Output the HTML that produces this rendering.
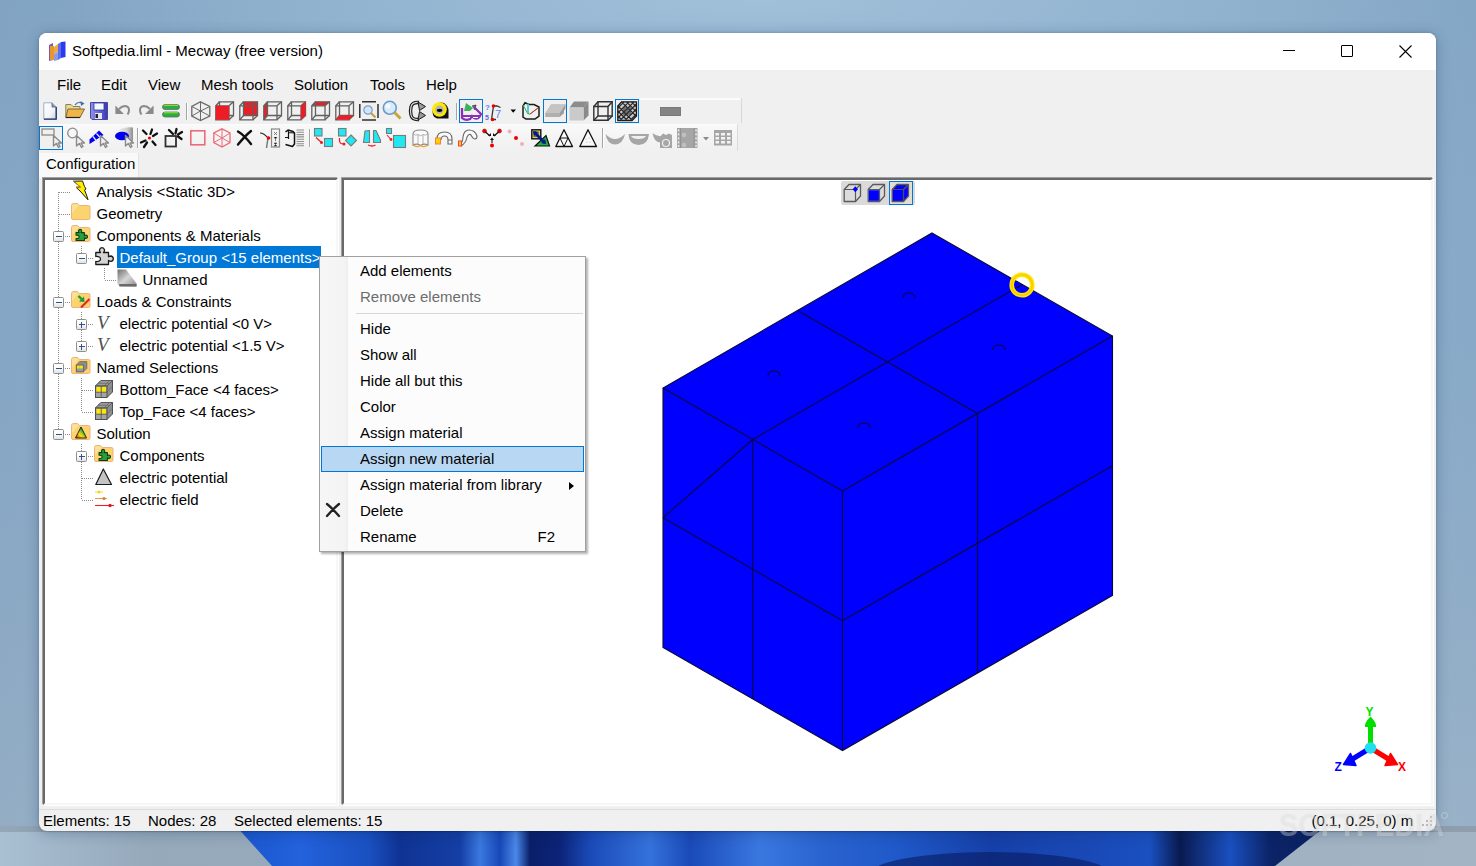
<!DOCTYPE html>
<html><head><meta charset="utf-8">
<style>
*{margin:0;padding:0;box-sizing:border-box}
html,body{width:1476px;height:866px;overflow:hidden}
body{position:relative;font-family:"Liberation Sans",sans-serif;font-size:15px;color:#000;
background:radial-gradient(ellipse 700px 120px at 760px 0px,rgba(190,215,235,.45),rgba(190,215,235,0)),linear-gradient(90deg,rgba(110,140,175,.25) 0%,rgba(255,255,255,0) 25%,rgba(255,255,255,0) 80%,rgba(110,140,175,.15) 100%),linear-gradient(180deg,#89acca 0%,#8eafcc 45%,#99b4cb 80%,#a2b9cc 100%);}
.a{position:absolute}
.t{position:absolute;white-space:nowrap;line-height:15px;font-size:15px}
svg{position:absolute;overflow:visible}
#win{position:absolute;left:39px;top:33px;width:1397px;height:798px;background:#f0f0f0;border-radius:8px;overflow:hidden;box-shadow:0 2px 14px rgba(10,40,80,.28), 0 0 3px rgba(0,0,0,.2)}
.sunk{position:absolute;background:#fff;border-top:2px solid #696969;border-left:2px solid #696969;border-right:2px solid #f7f7f7;border-bottom:2px solid #f7f7f7;box-shadow:-1px -1px 0 #a0a0a0, 1px 1px 0 #fff}
</style></head>
<body>
<svg class="a" style="left:0;top:826px" width="1476" height="40">
 <defs>
  <linearGradient id="wl" x1="0" x2="1" y1="0" y2="0">
   <stop offset="0" stop-color="#a9bfd2"/><stop offset="0.1" stop-color="#95a9bb"/><stop offset="0.6" stop-color="#9cadbd"/><stop offset="1" stop-color="#a3b4c4"/>
  </linearGradient>
  <linearGradient id="wb" gradientUnits="userSpaceOnUse" x1="0" x2="1476" y1="0" y2="0"><stop offset="0.1606" stop-color="#1a56cc"/><stop offset="0.2033" stop-color="#2362dc"/><stop offset="0.2507" stop-color="#1a50c0"/><stop offset="0.2710" stop-color="#0f3394"/><stop offset="0.3117" stop-color="#153fa5"/><stop offset="0.3252" stop-color="#3a78e0"/><stop offset="0.3388" stop-color="#1848b8"/><stop offset="0.3496" stop-color="#4a88e8"/><stop offset="0.3591" stop-color="#0a1f6a"/><stop offset="0.3794" stop-color="#0c2478"/><stop offset="0.3997" stop-color="#1a4ab8"/><stop offset="0.4404" stop-color="#3572dc"/><stop offset="0.4675" stop-color="#1a4ab8"/><stop offset="0.5149" stop-color="#3a78e0"/><stop offset="0.5556" stop-color="#2a64d0"/><stop offset="0.6098" stop-color="#1f58c8"/><stop offset="0.6707" stop-color="#1640a8"/><stop offset="0.7453" stop-color="#1a4ab8"/><stop offset="0.7791" stop-color="#1a50c0"/><stop offset="0.7995" stop-color="#0a1a50"/><stop offset="0.8333" stop-color="#1a50c0"/><stop offset="0.8604" stop-color="#0c2468"/><stop offset="0.8984" stop-color="#0a2060"/></linearGradient>
  <linearGradient id="wv" x1="0" x2="0" y1="0" y2="1"><stop offset="0" stop-color="#000" stop-opacity=".15"/><stop offset="1" stop-color="#000" stop-opacity="0"/></linearGradient>
 </defs>
 <rect x="0" y="0" width="1476" height="40" fill="url(#wl)"/>
 <polygon points="236,0 1326,0 1275,40 272,40" fill="url(#wb)"/><ellipse cx="990" cy="48" rx="120" ry="22" fill="#061a60" opacity=".6"/><path d="M0 0H1476V6H0Z" fill="#000" opacity=".12"/>
</svg>
<div id="win">
  <div class="a" style="left:0;top:0;width:1397px;height:37px;background:#fff"></div>
  <div class="t" style="left:33px;top:10px">Softpedia.liml - Mecway (free version)</div>
  <div class="a" style="left:1244px;top:17px;width:12px;height:1px;background:#000"></div>
  <div class="a" style="left:1302px;top:12px;width:12px;height:12px;border:1px solid #000;border-radius:1px"></div>
  <svg style="left:1360px;top:12px" width="13" height="13"><path d="M0.5 0.5L12.5 12.5M12.5 0.5L0.5 12.5" stroke="#000" stroke-width="1.1"/></svg>
  <div class="t" style="left:18px;top:44px">File</div>
  <div class="t" style="left:62px;top:44px">Edit</div>
  <div class="t" style="left:109px;top:44px">View</div>
  <div class="t" style="left:162px;top:44px">Mesh tools</div>
  <div class="t" style="left:255px;top:44px">Solution</div>
  <div class="t" style="left:331px;top:44px">Tools</div>
  <div class="t" style="left:387px;top:44px">Help</div>
  <div class="a" style="left:0;top:120px;width:100px;height:25px;background:#f9f9f9;border-right:1px solid #e3e3e3"></div>
  <div class="t" style="left:7px;top:123px">Configuration</div>
  <div class="a" style="left:0;top:776px;width:1397px;height:1px;background:#dcdcdc"></div>
  <div class="t" style="left:4px;top:780px">Elements: 15</div>
  <div class="t" style="left:109px;top:780px">Nodes: 28</div>
  <div class="t" style="left:195px;top:780px">Selected elements: 15</div>
  <div class="t" style="left:1272.5px;top:780px">(0.1, 0.25, 0) m</div>
</div>
<div class="sunk" style="left:43px;top:178px;width:295px;height:627px"></div>
<div class="sunk" style="left:342px;top:178px;width:1091px;height:627px"></div>
<div class="a" style="left:117px;top:246px;width:204px;height:22px;background:#0078d7"></div>
<div class="t" style="left:96.5px;top:184px;color:#000">Analysis &lt;Static 3D&gt;</div>
<div class="t" style="left:96.5px;top:206px;color:#000">Geometry</div>
<div class="t" style="left:96.5px;top:228px;color:#000">Components &amp; Materials</div>
<div class="t" style="left:119.5px;top:250px;color:#fff">Default_Group &lt;15 elements&gt;</div>
<div class="t" style="left:142.5px;top:272px;color:#000">Unnamed</div>
<div class="t" style="left:96.5px;top:294px;color:#000">Loads &amp; Constraints</div>
<div class="t" style="left:119.5px;top:316px;color:#000">electric potential &lt;0 V&gt;</div>
<div class="t" style="left:119.5px;top:338px;color:#000">electric potential &lt;1.5 V&gt;</div>
<div class="t" style="left:96.5px;top:360px;color:#000">Named Selections</div>
<div class="t" style="left:119.5px;top:382px;color:#000">Bottom_Face &lt;4 faces&gt;</div>
<div class="t" style="left:119.5px;top:404px;color:#000">Top_Face &lt;4 faces&gt;</div>
<div class="t" style="left:96.5px;top:426px;color:#000">Solution</div>
<div class="t" style="left:119.5px;top:448px;color:#000">Components</div>
<div class="t" style="left:119.5px;top:470px;color:#000">electric potential</div>
<div class="t" style="left:119.5px;top:492px;color:#000">electric field</div>
<div class="a" style="left:39px;top:98px;width:703px;height:25px;background:#f0f0f0;border-right:1px solid #d8d8d8"></div>
<div class="a" style="left:640px;top:98px;width:101px;height:1.5px;background:#fbfbfb"></div>
<div class="a" style="left:39px;top:124px;width:699px;height:27px;background:linear-gradient(180deg,#f9f9f9,#f4f4f4 50%,#f0f0f0);border-top:1px solid #fcfcfc;border-right:1px solid #dadada"></div>
<div class="a" style="left:459px;top:99px;width:24px;height:24px;border:1.5px solid #0078d7;background:#f2f0ee"></div>
<div class="a" style="left:543px;top:99px;width:24px;height:24px;border:1.5px solid #0078d7;background:#f2f0ee"></div>
<div class="a" style="left:615px;top:99px;width:24px;height:24px;border:1.5px solid #0078d7;background:#f2f0ee"></div>
<div class="a" style="left:39px;top:126px;width:24px;height:24px;border:1.5px solid #0078d7;background:#f2f0ee"></div>
<div class="a" style="left:186px;top:103px;width:1px;height:17px;background:#a5a5a5;box-shadow:1px 0 0 #fff"></div>
<div class="a" style="left:456px;top:103px;width:1px;height:17px;background:#a5a5a5;box-shadow:1px 0 0 #fff"></div>
<div class="a" style="left:137px;top:128px;width:1px;height:20px;background:#a5a5a5;box-shadow:1px 0 0 #fff"></div>
<div class="a" style="left:309px;top:129px;width:1px;height:18px;background:#a5a5a5;box-shadow:1px 0 0 #fff"></div>
<div class="a" style="left:602px;top:128px;width:1px;height:20px;background:#a5a5a5;box-shadow:1px 0 0 #fff"></div>
<svg style="left:0;top:0" width="1476" height="200"><g transform="translate(43,102)"><defs><linearGradient id="nd" x1="0" x2="1" y1="0" y2="1"><stop offset="0" stop-color="#fff"/><stop offset=".6" stop-color="#f2f4f8"/><stop offset="1" stop-color="#c8d0dc"/></linearGradient></defs><path d="M0.8 0.8H9L13.2 5V17.2H0.8Z" fill="url(#nd)" stroke="#9fb0c4" stroke-width="1"/><path d="M13.2 5V17.2H1" stroke="#1f2a6a" stroke-width="1.3" fill="none"/><path d="M9 0.8V5H13.2" fill="#8ea0b8" stroke="#4a5a88" stroke-width=".8"/></g><g transform="translate(65,100)"><path d="M10 5Q13 1 17 3" stroke="#5a7ab0" stroke-width="1.3" fill="none"/><path d="M15.5 1L19.5 3.5L16 6Z" fill="#4a6aa8"/><path d="M0.8 4.5H6L8 6.5H15V17.5H0.8Z" fill="#ead98a" stroke="#8a8060" stroke-width="1"/><path d="M3 9H19.5L15 17.5H0.8Z" fill="#f0b448" stroke="#7a6a40" stroke-width="1"/><path d="M1 17.5H15" stroke="#222" stroke-width="1.2"/></g><g transform="translate(90,102)"><defs><linearGradient id="fl" x1="0" x2="1"><stop offset="0" stop-color="#9090f0"/><stop offset="1" stop-color="#3a3ab0"/></linearGradient></defs><path d="M0.5 0.5H17.5V17.5H2L0.5 16Z" fill="url(#fl)" stroke="#4848a8" stroke-width="1"/><rect x="4" y="1" width="10" height="7" fill="#f6f8ff" stroke="#2a3aa0" stroke-width=".8"/><rect x="5" y="11" width="7" height="6" fill="#e6e6f0"/><rect x="5.5" y="12" width="2.5" height="4" fill="#222"/></g><g transform="translate(114,105)"><path d="M2 2L8.5 8.5M2 2V8.5H8.5Z" fill="#8a8a8a" stroke="#8a8a8a" stroke-width="1.2"/><path d="M5 4Q8 1 11 1Q15 1.5 15 5Q15 8 13.5 9.5" stroke="#8a8a8a" stroke-width="2" fill="none"/></g><g transform="translate(139,105)"><g transform="translate(16,0) scale(-1,1)"><path d="M2 2L8.5 8.5M2 2V8.5H8.5Z" fill="#8a8a8a" stroke="#8a8a8a" stroke-width="1.2"/><path d="M5 4Q8 1 11 1Q15 1.5 15 5Q15 8 13.5 9.5" stroke="#8a8a8a" stroke-width="2" fill="none"/></g></g><g transform="translate(162,104)"><rect x="0.5" y="0.5" width="17" height="5" rx="2.5" fill="#22b040" stroke="#6a6a6a" stroke-width=".8"/><path d="M2 1.3H16" stroke="#b0e030" stroke-width="1"/><rect x="0.5" y="8" width="17" height="5" rx="2.5" fill="#22b040" stroke="#6a6a6a" stroke-width=".8"/><path d="M2 8.8H16" stroke="#b0e030" stroke-width="1"/></g><g transform="translate(191,101)"><g stroke="#6a6a6a" stroke-width="1.3" fill="none"><path d="M9.5 0.8L18.8 5.5V15L9.5 19.5L0.8 15V5.5Z"/><path d="M9.5 10L9.5 0.8M9.5 10L0.8 15M9.5 10L18.8 15M9.5 10L0.8 5.5M9.5 10L18.8 5.5M9.5 10V19.5" stroke-width="1"/></g></g><g transform="translate(215,101)"><g stroke="#606060" stroke-width="1.3" fill="none"><path d="M4.5 0.8H18.5V14.5H4.5Z"/><path d="M0.8 4.8H14V18.8H0.8Z"/><path d="M0.8 4.8L4.5 0.8M14 4.8L18.5 0.8M14 18.8L18.5 14.5M0.8 18.8L4.5 14.5"/></g><path d="M0.8 4.8H14V18.8H0.8Z" fill="#ee1c24"/></g><g transform="translate(239,101)"><path d="M4.5 0.8H18.5V14.5H4.5Z" fill="#ee1c24"/><g stroke="#606060" stroke-width="1.3" fill="none"><path d="M4.5 0.8H18.5V14.5H4.5Z"/><path d="M0.8 4.8H14V18.8H0.8Z"/><path d="M0.8 4.8L4.5 0.8M14 4.8L18.5 0.8M14 18.8L18.5 14.5M0.8 18.8L4.5 14.5"/></g></g><g transform="translate(263,101)"><path d="M0.8 4.8L4.5 0.8V14.5L0.8 18.8Z" fill="#ee1c24"/><g stroke="#606060" stroke-width="1.3" fill="none"><path d="M4.5 0.8H18.5V14.5H4.5Z"/><path d="M0.8 4.8H14V18.8H0.8Z"/><path d="M0.8 4.8L4.5 0.8M14 4.8L18.5 0.8M14 18.8L18.5 14.5M0.8 18.8L4.5 14.5"/></g></g><g transform="translate(287,101)"><g stroke="#606060" stroke-width="1.3" fill="none"><path d="M4.5 0.8H18.5V14.5H4.5Z"/><path d="M0.8 4.8H14V18.8H0.8Z"/><path d="M0.8 4.8L4.5 0.8M14 4.8L18.5 0.8M14 18.8L18.5 14.5M0.8 18.8L4.5 14.5"/></g><path d="M14 4.8L18.5 0.8V14.5L14 18.8Z" fill="#ee1c24"/></g><g transform="translate(311,101)"><path d="M0.8 4.8L4.5 0.8H18.5L14 4.8Z" fill="#ee1c24"/><g stroke="#606060" stroke-width="1.3" fill="none"><path d="M4.5 0.8H18.5V14.5H4.5Z"/><path d="M0.8 4.8H14V18.8H0.8Z"/><path d="M0.8 4.8L4.5 0.8M14 4.8L18.5 0.8M14 18.8L18.5 14.5M0.8 18.8L4.5 14.5"/></g></g><g transform="translate(335,101)"><g stroke="#606060" stroke-width="1.3" fill="none"><path d="M4.5 0.8H18.5V14.5H4.5Z"/><path d="M0.8 4.8H14V18.8H0.8Z"/><path d="M0.8 4.8L4.5 0.8M14 4.8L18.5 0.8M14 18.8L18.5 14.5M0.8 18.8L4.5 14.5"/></g><path d="M0.8 18.8L4.5 14.5H18.5L14 18.8Z" fill="#ee1c24"/></g><g transform="translate(359,101)"><path d="M3 0.8H17M3 19H17M0.8 3V17M19 3V17" stroke="#303030" stroke-width="1.5"/><circle cx="9" cy="9" r="4.2" fill="#cfe6fa" stroke="#7aa0c8" stroke-width="1.2"/><path d="M12 12L16.5 16.5" stroke="#c8a040" stroke-width="2.2"/></g><g transform="translate(382,100)"><circle cx="7.8" cy="7.8" r="6.5" fill="#d6ecfc" stroke="#6d98c8" stroke-width="1.6"/><circle cx="6" cy="6" r="2.5" fill="#fff" opacity=".7"/><path d="M12.5 12.5L18.5 18.5" stroke="#c9a43a" stroke-width="3"/></g><g transform="translate(409,101)"><path d="M10 1.5Q3 1 2 6Q1 10 2 14Q3 19 10 18.5" stroke="#1a1a1a" stroke-width="3.4" fill="none"/><path d="M10 1.5Q3 1 2 6Q1 10 2 14Q3 19 10 18.5" stroke="#d8d8d8" stroke-width="1.2" fill="none"/><path d="M9 1L16.5 5.5L10.5 9.5Z" fill="#9a9a9a" stroke="#1a1a1a" stroke-width="1"/><path d="M10.5 10.5L16.5 14.5L9 19Z" fill="#9a9a9a" stroke="#1a1a1a" stroke-width="1"/></g><g transform="translate(431,101)"><path d="M2 14Q0.5 7 5 3Q9 0.5 13 2Q17.5 5 17.5 10V17.5H6Q3 17 2 14Z" fill="#111"/><circle cx="8.5" cy="8.5" r="7.3" fill="#ffe800"/><circle cx="8.5" cy="8.8" r="4.2" fill="#b4b4b4"/><ellipse cx="8.5" cy="9.3" rx="2.8" ry="1.6" fill="#000"/></g><g transform="translate(461,102)"><path d="M5 1L12 6L9 9H3Z" fill="#40b060"/><path d="M11 4L15 3L13.5 8" stroke="#333" fill="#3a9a50" stroke-width=".8"/><path d="M1 6V16Q4 19 9 17L11 14L13 16Q18 18 20 12L13 5" stroke="#8a30b8" stroke-width="2.3" fill="none"/><path d="M2 14H19" stroke="#8a30b8" stroke-width="2"/><path d="M3.5 15.5H9M12 15.5H17" stroke="#fff" stroke-width="1.2"/></g><g transform="translate(485,102)"><text x="0" y="8" font-size="8" font-family="Liberation Sans" font-weight="bold" fill="#6a7af0">?</text><text x="0" y="18" font-size="7" font-family="Liberation Sans" font-weight="bold" fill="#5a6ae0">5</text><path d="M8.5 4L6.5 17.5M8.5 4H12L15.5 5.5M6.5 17.5H11" stroke="#333" stroke-width="1.3" fill="none"/><circle cx="8.5" cy="4" r="1.8" fill="#ee0000"/><circle cx="7.5" cy="17.5" r="1.8" fill="#ee0000"/><text x="10" y="16" font-size="11" font-family="Liberation Sans" fill="#6a7af0">7</text></g><g transform="translate(510,109)"><path d="M0.5 0.5H6L3.2 3.8Z" fill="#000"/></g><g transform="translate(522,102)"><path d="M3 0.8L7 2.5H12L17 5V14L13 17H4L1 15V4Z" fill="none" stroke="#1a1a1a" stroke-width="1.5"/><path d="M1 3L6 12M6 1V10Q6 13 8 12L16 6" stroke="#30b040" stroke-width="1" fill="none"/><path d="M6 2V11" stroke="#40c8f0" stroke-width="1.5"/><path d="M8 12L16 6" stroke="#ee2020" stroke-width="1"/></g><g transform="translate(545,104)"><path d="M0.5 9L6 0.5H20.5L19 6V9.5L14 13H0.5Z" fill="#a8a8a8"/><path d="M0.5 9L6 0.5H20.5L15 9Z" fill="#c4c4c4"/><path d="M0.5 9H15V13H0.5Z" fill="#b0b0b0"/><path d="M15 9L20.5 0.5V4.5L15 13Z" fill="#9a9a9a"/></g><g transform="translate(569,101)"><path d="M5 0.5H19.5L14.5 6.5H0.5Z" fill="#8c8c8c"/><path d="M14.5 6.5L19.5 0.5V14.5L14.5 19.5Z" fill="#8a8a8a"/><rect x="0.5" y="6.5" width="14" height="13" fill="#cacaca"/></g><g transform="translate(593,101)"><g stroke="#303030" stroke-width="1.4" fill="none"><path d="M5 0.8H19.2V15H5Z"/><path d="M0.8 5.5H15V19.2H0.8Z"/><path d="M0.8 5.5L5 0.8M15 5.5L19.2 0.8M15 19.2L19.2 15M0.8 19.2L5 15"/></g></g><g transform="translate(617,101)"><path d="M4.5 0.8H19.5V15L15 19.5H0.8V5Z" fill="#c8c8c8"/><g stroke="#1a1a1a" stroke-width="1.3" fill="none"><path d="M4.5 0.8H19.5V15L15 19.5H0.8V5Z"/></g><g stroke="#222" stroke-width="1.1" fill="none"><path d="M0.8 7L7 0.8M0.8 12L12 0.8M0.8 17L17 0.8M3 19.5L19.5 3M8 19.5L19.5 8M13 19.5L19.5 13M4.5 0.8L19.5 15.5M0.8 5L15.3 19.5M0.8 10L10.3 19.5M0.8 15L5.3 19.5M9.5 0.8L19.5 10.8M14.5 0.8L19.5 5.8"/></g><rect x="6" y="6" width="8" height="8" fill="#333" opacity=".6"/></g><g transform="translate(660,107)"><rect x="0" y="0" width="21" height="9" fill="#7a7a7a"/><rect x="1" y="1" width="19" height="7" fill="#858585"/></g><g transform="translate(39,126)"><rect x="3" y="3" width="12" height="6" fill="none" stroke="#8a8a8a" stroke-width="1.3"/><path d="M14.5 9.5V20.0L17.3 17.5L19.5 21.5L21.0 20.5L19.0 17.0H22.5Z" fill="#f0f0f0" stroke="#8a8a8a" stroke-width="1.4" stroke-linejoin="round"/></g><g transform="translate(66,126)"><circle cx="6.5" cy="7" r="4.8" fill="none" stroke="#8a8a8a" stroke-width="1.3"/><path d="M10.5 9.5V20.0L13.3 17.5L15.5 21.5L17.0 20.5L15.0 17.0H18.5Z" fill="#f0f0f0" stroke="#8a8a8a" stroke-width="1.4" stroke-linejoin="round"/></g><g transform="translate(89,126)"><path d="M0.5 13.5L10 4.5L14.5 9L0.5 18Z" fill="#0000ee"/><path d="M4 10.5L7.5 15M7.5 7.5L11 11.5" stroke="#d8e4ff" stroke-width="1.3"/><path d="M11.5 9.5V20.0L14.3 17.5L16.5 21.5L18.0 20.5L16.0 17.0H19.5Z" fill="#f0f0f0" stroke="#8a8a8a" stroke-width="1.4" stroke-linejoin="round"/></g><g transform="translate(114,126)"><defs><linearGradient id="eg" x1="0" x2="1"><stop offset="0" stop-color="#f0f0f0"/><stop offset=".6" stop-color="#d0d0d0"/><stop offset="1" stop-color="#909090"/></linearGradient></defs><path d="M4 4Q10 0.5 19 1.5V15Q12 14 6 13Z" fill="url(#eg)"/><ellipse cx="8" cy="10" rx="7" ry="4.3" fill="#0000ee"/><path d="M11.5 9.5V20.0L14.3 17.5L16.5 21.5L18.0 20.5L16.0 17.0H19.5Z" fill="#f0f0f0" stroke="#8a8a8a" stroke-width="1.4" stroke-linejoin="round"/></g><g transform="translate(140,128)"><g stroke="#111" stroke-width="2.3" stroke-linecap="round"><path d="M3 2.5L6.5 6M12 1.5L10.5 6M17 5.5L13 8M1 14.5L5.5 12.5M4 19L7 14.5M15.5 17L12.5 13.5"/></g><circle cx="9.5" cy="10" r="1.6" fill="#ee0000"/></g><g transform="translate(164,128)"><rect x="1.5" y="8" width="10.5" height="10.5" fill="none" stroke="#303030" stroke-width="1.8"/><g stroke="#111" stroke-width="2.3" stroke-linecap="round"><path d="M5 2L9 6M12.5 1L11.5 5.5M18 4L14 6.5M17.5 11L14 8.5"/></g></g><g transform="translate(190,130)"><rect x="0.8" y="0.8" width="14" height="14" fill="none" stroke="#ec6b78" stroke-width="1.6"/></g><g transform="translate(213,128)"><g stroke="#ec6b78" stroke-width="1.3" fill="none"><path d="M9 0.8L17 5V14.5L9 19L0.8 14.5V5Z"/><path d="M9 10V0.8M9 10L0.8 14.5M9 10L17 14.5M9 10L0.8 5M9 10L17 5M9 10V19" stroke-width="1"/></g></g><g transform="translate(237,130)"><path d="M1 1.5Q7 5 14 14M14 1Q8 6 1 14.5" stroke="#111" stroke-width="2.4" stroke-linecap="round"/></g><g transform="translate(259,128)"><path d="M1 5Q5 5 9 10" stroke="#222" stroke-width="1.2" fill="none"/><path d="M9 10L7.5 20" stroke="#777" stroke-width="1.5"/><circle cx="9.5" cy="10" r="1.8" fill="#ee0000"/><rect x="12.5" y="1" width="8" height="18" fill="none" stroke="#888" stroke-width="1.2"/><path d="M15 4L18 7M18 4L15 7M15 9L16.5 11L18 9M16.5 11V13M15 15H18L15 18H18" stroke="#666" stroke-width=".8"/></g><g transform="translate(284,129)"><path d="M1.5 3L4 1L9 2.5L10.5 4V15L8.5 17.5L1.5 15.5" stroke="#111" stroke-width="1.5" fill="none" stroke-linejoin="round"/><path d="M4 1L4.5 3.5L10.5 4M4.5 3.5V10M1 8.5H4.5" stroke="#111" stroke-width="1.2" fill="none"/><g stroke="#8e8e8e" stroke-width="1.1"><path d="M12.5 1H20M12.5 3.3H20M12.5 5.6H20M12.5 7.9H20M12.5 10.2H20M12.5 12.5H20M12.5 14.8H20M12.5 16.8H20"/></g></g><g transform="translate(314,128)"><rect x="0.5" y="0.5" width="7.5" height="7.5" fill="#1fe8f2" stroke="#7a7a7a" stroke-width="1.1"/><path d="M2 9.5L7.5 14.5" stroke="#ee1c24" stroke-width="1.2"/><circle cx="7.5" cy="14.5" r="1.5" fill="#ee1c24"/><rect x="10.5" y="10.5" width="8" height="8" fill="#1fe8f2" stroke="#7a7a7a" stroke-width="1.1"/></g><g transform="translate(338,128)"><rect x="0.5" y="0.5" width="7.5" height="7.5" fill="#1fe8f2" stroke="#7a7a7a" stroke-width="1.1"/><path d="M1.5 10V13Q2 16 5.5 16" stroke="#ee1c24" stroke-width="1.2" fill="none"/><circle cx="6" cy="16" r="1.5" fill="#ee1c24"/><path d="M13 7L18.5 12.5L13 18L7.5 12.5Z" fill="#1fe8f2" stroke="#7a7a7a" stroke-width="1.1"/></g><g transform="translate(363,129)"><path d="M0.5 13.5L2 2L6.5 1.5V13.5Z" fill="#1fe8f2" stroke="#7a7a7a" stroke-width="1.1"/><path d="M10.5 1.5H13L17.5 11V13.5H10.5Z" fill="#1fe8f2" stroke="#7a7a7a" stroke-width="1.1"/><path d="M5 16Q9 18 12.5 16" stroke="#ee1c24" stroke-width="1.3" fill="none"/></g><g transform="translate(386,128)"><rect x="0.5" y="0.5" width="5" height="5" fill="#1fe8f2" stroke="#7a7a7a" stroke-width="1.1"/><path d="M1 7L4.5 11" stroke="#ee1c24" stroke-width="1.1"/><circle cx="5" cy="11.5" r="1.4" fill="#ee1c24"/><rect x="7.5" y="7.5" width="12" height="12" fill="#1fe8f2" stroke="#7a7a7a" stroke-width="1.1"/></g><g transform="translate(412,129)"><path d="M1 5Q1 1 8.5 1Q16 1 16 5V16Q12 14 8.5 16.5Q5 14 1 16Z" fill="#fafafa" stroke="#8a8a8a" stroke-width="1.1"/><path d="M1 5Q4 7 6 5.5Q8.5 8 11 5.5Q13 7 16 5M6 6V15M11 6V15" stroke="#aaa" stroke-width=".9" fill="none"/><path d="M1 16Q5 19 8.5 16.5Q12 19 16 16" stroke="#f0a030" stroke-width="1.3" fill="none"/></g><g transform="translate(435,130)"><path d="M2 9Q2 2 9.5 2Q17 2 17 9V14H13V10Q13 6 9.5 6Q6 6 6 10" fill="#fafafa" stroke="#6a6a6a" stroke-width="1.1"/><path d="M13 10H17" stroke="#6a6a6a" stroke-width="1"/><rect x="0.5" y="8" width="5" height="6" fill="#ffd000" stroke="#f08040" stroke-width="1"/></g><g transform="translate(458,129)"><path d="M2 15Q5 13 5 8Q6 1 11 1Q17 1 19 7Q19 10 17 10Q15 10 13 6Q11 4 9 8Q8 14 3 17" fill="#fafafa" stroke="#6a6a6a" stroke-width="1.1"/><rect x="0.5" y="12" width="3" height="5" fill="#ffd000" stroke="#f04040" stroke-width="1"/></g><g transform="translate(482,129)"><circle cx="2.5" cy="2" r="2" fill="#ee0000" stroke="#800" stroke-width=".5"/><circle cx="17.5" cy="2" r="2" fill="#ee0000" stroke="#800" stroke-width=".5"/><circle cx="10" cy="16.5" r="2" fill="#ee0000"/><path d="M3.5 3L8 7M16.5 3L12 7" stroke="#111" stroke-width="1.3"/><path d="M6 7H9V4ZM14 7H11V4Z" fill="#111"/><path d="M10 14V10" stroke="#333" stroke-width="1.3"/><path d="M8 11L10 8.5L12 11Z" fill="#111"/></g><g transform="translate(507,129)"><circle cx="2.5" cy="2.5" r="2" fill="#f0b0b8"/><circle cx="9" cy="9" r="2" fill="#ee0000"/><circle cx="15" cy="15" r="2" fill="#f0b0b8"/></g><g transform="translate(531,129)"><rect x="0.8" y="0.8" width="9" height="9" fill="#f0d040" stroke="#111" stroke-width="1.4"/><rect x="2.5" y="2.5" width="5.5" height="5.5" fill="#2040c0" opacity=".7"/><path d="M4 17L15 6.5L18.5 17Z" fill="#20b040" stroke="#111" stroke-width="1.2"/><path d="M3 3L14 14" stroke="#001a8a" stroke-width="2.6"/><path d="M2 2L7 3L3 7Z M15 15L10 14L14 10Z" fill="#001a8a"/></g><g transform="translate(555,129)"><path d="M9 0.8L17.5 17.5H0.8Z" fill="#fafafa" stroke="#111" stroke-width="1.3" stroke-linejoin="round"/><path d="M5 9H13L9 17.5Z" fill="none" stroke="#111" stroke-width="1"/></g><g transform="translate(579,129)"><path d="M9 0.8L17.5 17.5H0.8Z" fill="#fafafa" stroke="#111" stroke-width="1.3" stroke-linejoin="round"/><g fill="#aaa"><circle cx="7" cy="10" r=".6"/><circle cx="10" cy="9" r=".6"/><circle cx="8" cy="13" r=".6"/><circle cx="11" cy="13" r=".6"/></g></g><g transform="translate(605,133)"><path d="M0.5 1Q2 11 10 11.5Q18 11 20 1Q15 6 10 6Q5 6 0.5 1Z" fill="#a6a6a6"/></g><g transform="translate(628,133)"><path d="M0.5 1H21Q20 12 10.5 12Q1 12 0.5 1Z" fill="#a6a6a6"/><path d="M3 3H18Q16.5 6 10.5 6Q4.5 6 3 3Z" fill="#f0f0f0"/></g><g transform="translate(652,132)"><path d="M0.5 1Q2 10 8 10.5L10 4Q5 5 0.5 1Z" fill="#a6a6a6"/><path d="M8 5L11 1.5L14 3L17 1.5L20 3V16H8Z" fill="#a6a6a6"/><circle cx="14" cy="11" r="3.5" fill="none" stroke="#f0f0f0" stroke-width="1.2"/></g><g transform="translate(677,128)"><rect x="0" y="0" width="20.5" height="20" fill="#a6a6a6"/><g fill="#f0f0f0"><rect x="0.8" y="1.5" width="1.5" height="1.8"/><rect x="0.8" y="5.5" width="1.5" height="1.8"/><rect x="0.8" y="9.5" width="1.5" height="1.8"/><rect x="0.8" y="13.5" width="1.5" height="1.8"/><rect x="0.8" y="17" width="1.5" height="1.8"/><rect x="18.3" y="1.5" width="1.5" height="1.8"/><rect x="18.3" y="5.5" width="1.5" height="1.8"/><rect x="18.3" y="9.5" width="1.5" height="1.8"/><rect x="18.3" y="13.5" width="1.5" height="1.8"/><rect x="18.3" y="17" width="1.5" height="1.8"/></g><path d="M3.5 0V20M17 0V20" stroke="#8e8e8e" stroke-width=".8"/><circle cx="7" cy="7" r="2.2" fill="#c0c0c0"/><circle cx="7" cy="17" r="2.2" fill="#c0c0c0"/></g><g transform="translate(703,137)"><path d="M0 0H6L3 3.5Z" fill="#8a8a8a"/></g><g transform="translate(714,130)"><rect x="0" y="0" width="18" height="15.5" fill="#a6a6a6"/><g fill="#f4f4f4"><rect x="1.5" y="3" width="3.5" height="2.5"/><rect x="7" y="3" width="4" height="2.5"/><rect x="13" y="3" width="3.5" height="2.5"/><rect x="1.5" y="7" width="3.5" height="2.5"/><rect x="7" y="7" width="4" height="2.5"/><rect x="13" y="7" width="3.5" height="2.5"/><rect x="1.5" y="11" width="3.5" height="2.5"/><rect x="7" y="11" width="4" height="2.5"/><rect x="13" y="11" width="3.5" height="2.5"/></g></g></svg>
<svg style="left:0;top:0" width="1476" height="866"><polygon points="932,233 1112.5,336 1112.5,595.5 842.5,750.5 663,647.5 663,388" fill="#0000ff"/><g stroke="#0a0a3a" stroke-width="1.1" fill="none"><polygon points="932,233 1112.5,336 1112.5,595.5 842.5,750.5 663,647.5 663,388"/><line x1="663" y1="388" x2="842.5" y2="491"/><line x1="842.5" y1="491" x2="1112.5" y2="336"/><line x1="842.5" y1="491" x2="842.5" y2="750.5"/><line x1="797.5" y1="310.5" x2="977.5" y2="413.5"/><line x1="752.75" y1="439.5" x2="1022.25" y2="284.5"/><line x1="752.75" y1="439.5" x2="752.75" y2="699.0"/><line x1="977.5" y1="413.5" x2="977.5" y2="673.0"/><line x1="663" y1="517.75" x2="842.5" y2="620.75"/><line x1="842.5" y1="620.75" x2="1112.5" y2="465.75"/><line x1="663" y1="517.75" x2="752.75" y2="439.5"/></g><path d="M903 298Q903 293 909 293Q915 293 915 298" stroke="#0a0a3a" stroke-width="1.1" fill="none"/><path d="M768 376Q768 371 774 371Q780 371 780 376" stroke="#0a0a3a" stroke-width="1.1" fill="none"/><path d="M993 350Q993 345 999 345Q1005 345 1005 350" stroke="#0a0a3a" stroke-width="1.1" fill="none"/><path d="M858 428Q858 423 864 423Q870 423 870 428" stroke="#0a0a3a" stroke-width="1.1" fill="none"/><circle cx="1022" cy="285" r="10.3" stroke="#ffe600" stroke-width="4.6" fill="none"/><circle cx="1022" cy="285" r="10.3" stroke="#f6c000" stroke-width="1.6" fill="none" opacity=".7"/></svg>
<div class="a" style="left:841px;top:181px;width:74px;height:24px;background:#dadada;border-radius:2px"></div>
<div class="a" style="left:889px;top:181px;width:24px;height:24px;border:1.3px solid #0078d7;background:#e3ddd8"></div>
<svg style="left:843px;top:183px" width="20" height="20"><path d="M1.2 6.5L6 1.5H17.5V13L12.5 18.5H1.2Z" fill="#dcdcdc" stroke="#5a5a5a" stroke-width="1.3" stroke-linejoin="round"/><path d="M1.2 6.5H12.5V18.5M12.5 6.5L17.5 1.5" stroke="#5a5a5a" stroke-width="1.2" fill="none"/><path d="M12.3 3.3L15 6.3L12.3 9.3L9.6 6.3Z" fill="#0000ff"/></svg>
<svg style="left:867px;top:183px" width="20" height="20"><path d="M1.2 6.5L6 1.5H17.5V13L12.5 18.5H1.2Z" fill="#dcdcdc" stroke="#5a5a5a" stroke-width="1.3" stroke-linejoin="round"/><path d="M1.2 6.5H12.5V18.5M12.5 6.5L17.5 1.5" stroke="#5a5a5a" stroke-width="1.2" fill="none"/><rect x="1.9" y="7.2" width="10" height="10.6" fill="#0000ff"/></svg>
<svg style="left:891px;top:183px" width="20" height="20"><path d="M1.2 6.5L6 1.5H17.5V13L12.5 18.5H1.2Z" fill="#0000ff" stroke="#5a5a5a" stroke-width="1.3" stroke-linejoin="round"/><path d="M1.2 6.5H12.5V18.5M12.5 6.5L17.5 1.5" stroke="#5a5a5a" stroke-width="1.2" fill="none"/><path d="M1.2 6.5H12.5V18.5M12.5 6.5L17.5 1.5" stroke="#4a4a6a" stroke-width="1.2" fill="none"/></svg>
<svg style="left:1330px;top:700px" width="90" height="80">
<g transform="translate(40.5,48)">
<path d="M0 0V-22" stroke="#00e000" stroke-width="5"/><path d="M0 -31.5Q-6.5 -25 -5.5 -21H5.5Q6.5 -25 0 -31.5Z" fill="#00e000"/>
<path d="M0 0L18 11" stroke="#ff0000" stroke-width="5"/><path d="M20 5.5L14.5 17.5L27 16.5Z" fill="#ff0000" stroke="#ff0000" stroke-width="1.5" stroke-linejoin="round"/>
<path d="M0 0L-18 11" stroke="#0000ff" stroke-width="5"/><path d="M-20 5.5L-14.5 17.5L-27 16.5Z" fill="#0000ff" stroke="#0000ff" stroke-width="1.5" stroke-linejoin="round"/>
<circle cx="0" cy="0" r="5.8" fill="#22ddee"/>
</g>
<text x="35.5" y="16" font-family="Liberation Sans" font-weight="bold" font-size="12" fill="#00e000">Y</text>
<text x="68" y="71" font-family="Liberation Sans" font-weight="bold" font-size="12" fill="#ff0000">X</text>
<text x="4.5" y="71" font-family="Liberation Sans" font-weight="bold" font-size="12" fill="#0000ff">Z</text>
</svg>
<div class="a" style="left:58px;top:192px;width:1px;height:242px;background:repeating-linear-gradient(180deg,#8c8c8c 0 1px,transparent 1px 2px)"></div>
<div class="a" style="left:59px;top:192px;width:12px;height:1px;background:repeating-linear-gradient(90deg,#8c8c8c 0 1px,transparent 1px 2px)"></div>
<div class="a" style="left:59px;top:214px;width:12px;height:1px;background:repeating-linear-gradient(90deg,#8c8c8c 0 1px,transparent 1px 2px)"></div>
<div class="a" style="left:59px;top:236px;width:12px;height:1px;background:repeating-linear-gradient(90deg,#8c8c8c 0 1px,transparent 1px 2px)"></div>
<div class="a" style="left:59px;top:302px;width:12px;height:1px;background:repeating-linear-gradient(90deg,#8c8c8c 0 1px,transparent 1px 2px)"></div>
<div class="a" style="left:59px;top:368px;width:12px;height:1px;background:repeating-linear-gradient(90deg,#8c8c8c 0 1px,transparent 1px 2px)"></div>
<div class="a" style="left:59px;top:434px;width:12px;height:1px;background:repeating-linear-gradient(90deg,#8c8c8c 0 1px,transparent 1px 2px)"></div>
<div class="a" style="left:81px;top:246px;width:1px;height:12px;background:repeating-linear-gradient(180deg,#8c8c8c 0 1px,transparent 1px 2px)"></div>
<div class="a" style="left:82px;top:258px;width:12px;height:1px;background:repeating-linear-gradient(90deg,#8c8c8c 0 1px,transparent 1px 2px)"></div>
<div class="a" style="left:81px;top:312px;width:1px;height:34px;background:repeating-linear-gradient(180deg,#8c8c8c 0 1px,transparent 1px 2px)"></div>
<div class="a" style="left:82px;top:324px;width:12px;height:1px;background:repeating-linear-gradient(90deg,#8c8c8c 0 1px,transparent 1px 2px)"></div>
<div class="a" style="left:82px;top:346px;width:12px;height:1px;background:repeating-linear-gradient(90deg,#8c8c8c 0 1px,transparent 1px 2px)"></div>
<div class="a" style="left:81px;top:378px;width:1px;height:34px;background:repeating-linear-gradient(180deg,#8c8c8c 0 1px,transparent 1px 2px)"></div>
<div class="a" style="left:82px;top:390px;width:12px;height:1px;background:repeating-linear-gradient(90deg,#8c8c8c 0 1px,transparent 1px 2px)"></div>
<div class="a" style="left:82px;top:412px;width:12px;height:1px;background:repeating-linear-gradient(90deg,#8c8c8c 0 1px,transparent 1px 2px)"></div>
<div class="a" style="left:81px;top:444px;width:1px;height:56px;background:repeating-linear-gradient(180deg,#8c8c8c 0 1px,transparent 1px 2px)"></div>
<div class="a" style="left:82px;top:456px;width:12px;height:1px;background:repeating-linear-gradient(90deg,#8c8c8c 0 1px,transparent 1px 2px)"></div>
<div class="a" style="left:82px;top:478px;width:12px;height:1px;background:repeating-linear-gradient(90deg,#8c8c8c 0 1px,transparent 1px 2px)"></div>
<div class="a" style="left:82px;top:500px;width:12px;height:1px;background:repeating-linear-gradient(90deg,#8c8c8c 0 1px,transparent 1px 2px)"></div>
<div class="a" style="left:104px;top:268px;width:1px;height:12px;background:repeating-linear-gradient(180deg,#8c8c8c 0 1px,transparent 1px 2px)"></div>
<div class="a" style="left:105px;top:280px;width:12px;height:1px;background:repeating-linear-gradient(90deg,#8c8c8c 0 1px,transparent 1px 2px)"></div>
<div class="a" style="left:53px;top:231px;width:11px;height:11px;border:1px solid #8f8f8f;border-radius:1.5px;background:linear-gradient(180deg,#fdfdfd 45%,#e2e2e2)"></div>
<div class="a" style="left:55.5px;top:236px;width:6px;height:1px;background:#2f4f8f"></div>
<div class="a" style="left:53px;top:297px;width:11px;height:11px;border:1px solid #8f8f8f;border-radius:1.5px;background:linear-gradient(180deg,#fdfdfd 45%,#e2e2e2)"></div>
<div class="a" style="left:55.5px;top:302px;width:6px;height:1px;background:#2f4f8f"></div>
<div class="a" style="left:53px;top:363px;width:11px;height:11px;border:1px solid #8f8f8f;border-radius:1.5px;background:linear-gradient(180deg,#fdfdfd 45%,#e2e2e2)"></div>
<div class="a" style="left:55.5px;top:368px;width:6px;height:1px;background:#2f4f8f"></div>
<div class="a" style="left:53px;top:429px;width:11px;height:11px;border:1px solid #8f8f8f;border-radius:1.5px;background:linear-gradient(180deg,#fdfdfd 45%,#e2e2e2)"></div>
<div class="a" style="left:55.5px;top:434px;width:6px;height:1px;background:#2f4f8f"></div>
<div class="a" style="left:76px;top:253px;width:11px;height:11px;border:1px solid #8f8f8f;border-radius:1.5px;background:linear-gradient(180deg,#fdfdfd 45%,#e2e2e2)"></div>
<div class="a" style="left:78.5px;top:258px;width:6px;height:1px;background:#2f4f8f"></div>
<div class="a" style="left:76px;top:319px;width:11px;height:11px;border:1px solid #8f8f8f;border-radius:1.5px;background:linear-gradient(180deg,#fdfdfd 45%,#e2e2e2)"></div>
<div class="a" style="left:78.5px;top:324px;width:6px;height:1px;background:#2f4f8f"></div>
<div class="a" style="left:81px;top:321.5px;width:1px;height:6px;background:#2f4f8f"></div>
<div class="a" style="left:76px;top:341px;width:11px;height:11px;border:1px solid #8f8f8f;border-radius:1.5px;background:linear-gradient(180deg,#fdfdfd 45%,#e2e2e2)"></div>
<div class="a" style="left:78.5px;top:346px;width:6px;height:1px;background:#2f4f8f"></div>
<div class="a" style="left:81px;top:343.5px;width:1px;height:6px;background:#2f4f8f"></div>
<div class="a" style="left:76px;top:451px;width:11px;height:11px;border:1px solid #8f8f8f;border-radius:1.5px;background:linear-gradient(180deg,#fdfdfd 45%,#e2e2e2)"></div>
<div class="a" style="left:78.5px;top:456px;width:6px;height:1px;background:#2f4f8f"></div>
<div class="a" style="left:81px;top:453.5px;width:1px;height:6px;background:#2f4f8f"></div>
<svg style="left:73px;top:180px" width="18" height="21"><path d="M0.6 1.2L9.5 1L11.5 6.5L13 9L11.5 10L13.5 15L15 19.8L7 11L3 7.3L7.3 7Z" fill="#ffec00" stroke="#1a1a1a" stroke-width="1" stroke-linejoin="round"/><path d="M0.6 1.2L7.3 7L3 7.3" stroke="#c88a20" stroke-width="1" fill="none"/></svg>
<svg style="left:71px;top:203px" width="20" height="17"><path d="M0.5 2.5Q0.5 0.5 2.5 0.5H6.5L8.5 2.5H17.5Q19 2.5 19 4V15Q19 16.5 17.5 16.5H2Q0.5 16.5 0.5 15Z" fill="#fbd36f" stroke="#efb27c" stroke-width="1"/><path d="M1.2 2.5Q1.2 1.2 2.5 1.2H6.3L7.5 2.5 L3 8 L1.2 10Z" fill="#f6e6a8" opacity=".8"/></svg>
<svg style="left:71px;top:225px" width="20" height="17"><path d="M0.5 2.5Q0.5 0.5 2.5 0.5H6.5L8.5 2.5H17.5Q19 2.5 19 4V15Q19 16.5 17.5 16.5H2Q0.5 16.5 0.5 15Z" fill="#fbd36f" stroke="#efb27c" stroke-width="1"/><path d="M1.2 2.5Q1.2 1.2 2.5 1.2H6.3L7.5 2.5 L3 8 L1.2 10Z" fill="#f6e6a8" opacity=".8"/><g transform="translate(4.5,4) scale(0.66)"><path d="M0.8 5.5H5.5Q4.2 4.2 4.5 2.8Q5 0.6 7 0.6Q9 0.6 9.5 2.8Q9.8 4.2 8.5 5.5H13.5V9.8Q14.5 9 16 9Q18.3 9.5 18.3 11.7Q18.3 14 16 14.3Q14.5 14.3 13.5 13.5V17.5H0.8V14.5Q5.5 14.8 5.5 12Q5.5 9.2 0.8 9.5Z" fill="#26a03c" stroke="#123a18" stroke-width="1.6" stroke-linejoin="round"/></g></svg>
<svg style="left:95px;top:247px" width="20" height="19"><path d="M0.8 5.5H5.5Q4.2 4.2 4.5 2.8Q5 0.6 7 0.6Q9 0.6 9.5 2.8Q9.8 4.2 8.5 5.5H13.5V9.8Q14.5 9 16 9Q18.3 9.5 18.3 11.7Q18.3 14 16 14.3Q14.5 14.3 13.5 13.5V17.5H0.8V14.5Q5.5 14.8 5.5 12Q5.5 9.2 0.8 9.5Z" fill="#d4d4d4" stroke="#1a1a1a" stroke-width="1.3" stroke-linejoin="round"/></svg>
<svg style="left:117px;top:269px" width="21" height="18"><defs><linearGradient id="sh" x1="0" x2="1" y1="0" y2="1"><stop offset="0" stop-color="#6e6e6e"/><stop offset=".5" stop-color="#d6d6d6"/><stop offset="1" stop-color="#8a8a8a"/></linearGradient></defs><path d="M0.5 0.5H9L19.5 14.5V17.5H2.5L0.5 15Z" fill="url(#sh)"/><path d="M2 15H19.5V17.5H2.5Z" fill="#6a6a6a"/></svg>
<svg style="left:71px;top:291px" width="20" height="17"><path d="M0.5 2.5Q0.5 0.5 2.5 0.5H6.5L8.5 2.5H17.5Q19 2.5 19 4V15Q19 16.5 17.5 16.5H2Q0.5 16.5 0.5 15Z" fill="#fbd36f" stroke="#efb27c" stroke-width="1"/><path d="M1.2 2.5Q1.2 1.2 2.5 1.2H6.3L7.5 2.5 L3 8 L1.2 10Z" fill="#f6e6a8" opacity=".8"/><path d="M7.5 5L11 8.5" stroke="#1d9a36" stroke-width="2.4"/><path d="M13.5 11L8 10.5L13 5.5Z" fill="#1d9a36"/><path d="M10 16.5L18.5 8" stroke="#e8232a" stroke-width="2.2"/></svg>
<div class="t" style="left:97px;top:313px;font-family:'Liberation Serif',serif;font-style:italic;font-size:19px;line-height:19px;color:#505050">V</div>
<div class="t" style="left:97px;top:335px;font-family:'Liberation Serif',serif;font-style:italic;font-size:19px;line-height:19px;color:#505050">V</div>
<svg style="left:71px;top:357px" width="20" height="17"><path d="M0.5 2.5Q0.5 0.5 2.5 0.5H6.5L8.5 2.5H17.5Q19 2.5 19 4V15Q19 16.5 17.5 16.5H2Q0.5 16.5 0.5 15Z" fill="#fbd36f" stroke="#efb27c" stroke-width="1"/><path d="M1.2 2.5Q1.2 1.2 2.5 1.2H6.3L7.5 2.5 L3 8 L1.2 10Z" fill="#f6e6a8" opacity=".8"/><g transform="translate(5,4) scale(0.62)"><path d="M0.5 6.5L6 1H17.5V12L12 17.5H0.5Z" fill="#8c8c8c" stroke="#555"/><rect x="0.5" y="6.5" width="11.5" height="11" fill="#9a9a9a" stroke="#555"/><rect x="1.5" y="7.5" width="4.5" height="4.5" fill="#ffe600"/><rect x="6.5" y="7.5" width="4.5" height="4.5" fill="#ffe600"/></g></svg>
<svg style="left:95px;top:379.5px" width="18" height="18"><path d="M0.5 6L6 0.5H17.5V12L12 17.5H0.5Z" fill="#8e8e8e" stroke="#505050"/><path d="M0.5 6L6 0.5H17.5L12 6Z" fill="#9c9c9c" stroke="#505050" stroke-width=".8"/><path d="M3.2 3.3H14.8M9 6L14.5 .5M12 11.8L17.5 6.3" stroke="#6a6a6a" stroke-width=".8"/><rect x="0.5" y="6" width="11.5" height="11.5" fill="#a4a4a4" stroke="#505050"/><rect x="1.5" y="7" width="4.5" height="5" fill="#ffe800"/><rect x="6.5" y="7" width="4.5" height="5" fill="#ffe800"/><path d="M6.2 6V17.5M.5 12.2H12" stroke="#505050" stroke-width=".8"/></svg>
<svg style="left:95px;top:401.5px" width="18" height="18"><path d="M0.5 6L6 0.5H17.5V12L12 17.5H0.5Z" fill="#8e8e8e" stroke="#505050"/><path d="M0.5 6L6 0.5H17.5L12 6Z" fill="#9c9c9c" stroke="#505050" stroke-width=".8"/><path d="M3.2 3.3H14.8M9 6L14.5 .5M12 11.8L17.5 6.3" stroke="#6a6a6a" stroke-width=".8"/><rect x="0.5" y="6" width="11.5" height="11.5" fill="#a4a4a4" stroke="#505050"/><rect x="1.5" y="7" width="4.5" height="5" fill="#ffe800"/><rect x="6.5" y="7" width="4.5" height="5" fill="#ffe800"/><path d="M6.2 6V17.5M.5 12.2H12" stroke="#505050" stroke-width=".8"/></svg>
<svg style="left:71px;top:423px" width="20" height="17"><path d="M0.5 2.5Q0.5 0.5 2.5 0.5H6.5L8.5 2.5H17.5Q19 2.5 19 4V15Q19 16.5 17.5 16.5H2Q0.5 16.5 0.5 15Z" fill="#fbd36f" stroke="#efb27c" stroke-width="1"/><path d="M1.2 2.5Q1.2 1.2 2.5 1.2H6.3L7.5 2.5 L3 8 L1.2 10Z" fill="#f6e6a8" opacity=".8"/><defs><linearGradient id="rb" x1="0" x2="1" y1="1" y2="0"><stop offset="0" stop-color="#d0201a"/><stop offset=".35" stop-color="#ffe000"/><stop offset=".65" stop-color="#30b040"/><stop offset="1" stop-color="#2050e0"/></linearGradient></defs><path d="M10 4L15.5 15H4.5Z" fill="url(#rb)" stroke="#222" stroke-width="1"/></svg>
<svg style="left:94px;top:445px" width="20" height="17"><path d="M0.5 2.5Q0.5 0.5 2.5 0.5H6.5L8.5 2.5H17.5Q19 2.5 19 4V15Q19 16.5 17.5 16.5H2Q0.5 16.5 0.5 15Z" fill="#fbd36f" stroke="#efb27c" stroke-width="1"/><path d="M1.2 2.5Q1.2 1.2 2.5 1.2H6.3L7.5 2.5 L3 8 L1.2 10Z" fill="#f6e6a8" opacity=".8"/><g transform="translate(4.5,4) scale(0.66)"><path d="M0.8 5.5H5.5Q4.2 4.2 4.5 2.8Q5 0.6 7 0.6Q9 0.6 9.5 2.8Q9.8 4.2 8.5 5.5H13.5V9.8Q14.5 9 16 9Q18.3 9.5 18.3 11.7Q18.3 14 16 14.3Q14.5 14.3 13.5 13.5V17.5H0.8V14.5Q5.5 14.8 5.5 12Q5.5 9.2 0.8 9.5Z" fill="#26a03c" stroke="#123a18" stroke-width="1.6" stroke-linejoin="round"/></g></svg>
<svg style="left:95px;top:468px" width="18" height="18"><path d="M8.3 1L16.5 16.5H0.8Z" fill="#c4c4c4" stroke="#1a1a1a" stroke-width="1.2" stroke-linejoin="round"/></svg>
<svg style="left:95px;top:489px" width="20" height="20"><path d="M0 3H8" stroke="#f7d35a" stroke-width="1"/><circle cx="4" cy="3" r="1.6" fill="#ffd800"/><path d="M0 9.5H12" stroke="#e59a4a" stroke-width="1"/><circle cx="9" cy="9.5" r="1.6" fill="#d9822b"/><path d="M0 16.5H19" stroke="#e8242c" stroke-width="1.1"/><circle cx="15" cy="16.5" r="1.7" fill="#e0141c"/></svg>
<div class="a" style="left:319px;top:256px;width:267px;height:296px;background:#fcfcfc;border:1px solid #a0a0a0;box-shadow:2px 2px 2px rgba(0,0,0,.3)"></div>
<div class="a" style="left:320px;top:257px;width:28px;height:294px;background:linear-gradient(90deg,#f6f6f6,#f4f4f4 85%,#eeeeee)"></div>
<div class="a" style="left:356px;top:313px;width:227px;height:1px;background:#d7d7d7"></div>
<div class="a" style="left:321px;top:446px;width:263px;height:26px;background:#b8d7f2;border:1px solid #0078d7"></div>
<div class="t" style="left:360px;top:263px;color:#000">Add elements</div>
<div class="t" style="left:360px;top:289px;color:#6d6d6d">Remove elements</div>
<div class="t" style="left:360px;top:321px;color:#000">Hide</div>
<div class="t" style="left:360px;top:347px;color:#000">Show all</div>
<div class="t" style="left:360px;top:373px;color:#000">Hide all but this</div>
<div class="t" style="left:360px;top:399px;color:#000">Color</div>
<div class="t" style="left:360px;top:425px;color:#000">Assign material</div>
<div class="t" style="left:360px;top:451px;color:#000">Assign new material</div>
<div class="t" style="left:360px;top:477px;color:#000">Assign material from library</div>
<div class="t" style="left:360px;top:503px;color:#000">Delete</div>
<div class="t" style="left:360px;top:529px;color:#000">Rename</div>
<div class="t" style="left:537.5px;top:529px">F2</div>
<svg style="left:569px;top:482px" width="6" height="8"><path d="M0 0L5 4L0 8Z" fill="#000"/></svg>
<svg style="left:48px;top:41px" width="20" height="20"><path d="M1 4L5 2V19L1 20Z" fill="#7a5ab0"/><path d="M2 5H6V19H2Z" fill="#e8962e"/><path d="M6 6L10 3V11L6 13Z" fill="#f0a848"/><path d="M10 3L13 1V17L10 19Z" fill="#5a70e8"/><path d="M13 1L17.5 0.5V16L13 17Z" fill="#2a3af0"/><path d="M6 13L10 11V19L6 20Z" fill="#8a9af0"/></svg>
<svg style="left:326px;top:503px" width="14" height="14"><path d="M1 1Q6 5 13 13M13 1Q7 6 1 13" stroke="#222" stroke-width="2.3" stroke-linecap="round"/></svg>
<svg style="left:1422px;top:816px" width="12" height="12"><g fill="#b8b8b8"><rect x="8" y="0" width="2" height="2"/><rect x="4" y="4" width="2" height="2"/><rect x="8" y="4" width="2" height="2"/><rect x="0" y="8" width="2" height="2"/><rect x="4" y="8" width="2" height="2"/><rect x="8" y="8" width="2" height="2"/></g></svg>
<div class="a" style="left:1279px;top:810px;font-family:'Liberation Sans',sans-serif;font-weight:bold;font-size:31px;line-height:31px;letter-spacing:0px;color:rgba(255,255,255,.3);text-shadow:0 0 1px rgba(120,120,120,.15);white-space:nowrap;transform:scaleX(0.93);transform-origin:0 0">SOFTPEDIA</div>
<div class="a" style="left:1441px;top:812px;width:7px;height:7px;border:1px solid rgba(255,255,255,.3);border-radius:50%"></div>
</body></html>
